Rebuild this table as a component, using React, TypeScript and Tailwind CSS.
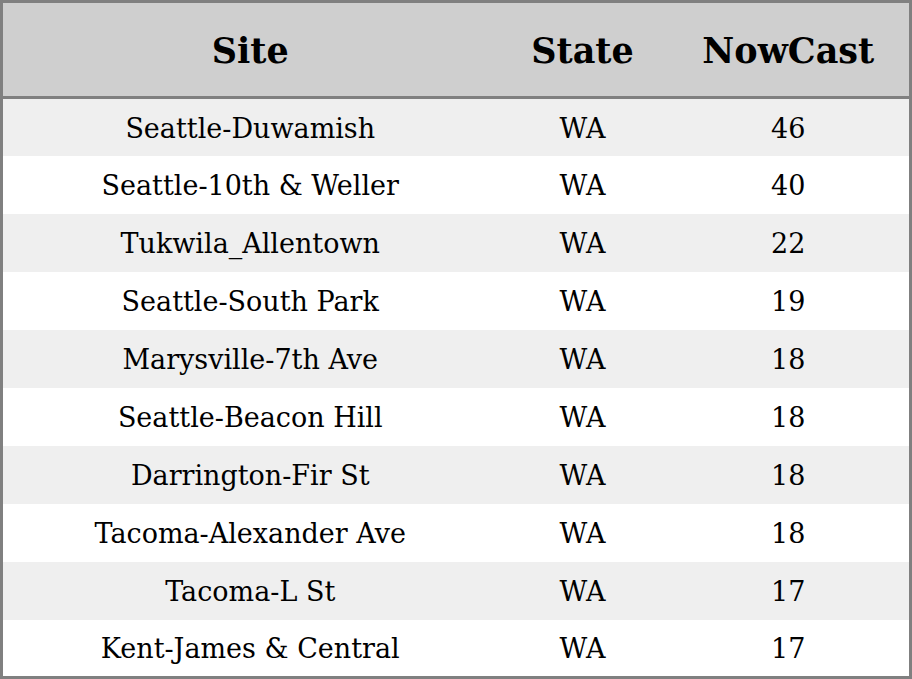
import React from "react";

const rows = [
  ["Seattle-Duwamish", "WA", "46"],
  ["Seattle-10th & Weller", "WA", "40"],
  ["Tukwila_Allentown", "WA", "22"],
  ["Seattle-South Park", "WA", "19"],
  ["Marysville-7th Ave", "WA", "18"],
  ["Seattle-Beacon Hill", "WA", "18"],
  ["Darrington-Fir St", "WA", "18"],
  ["Tacoma-Alexander Ave", "WA", "18"],
  ["Tacoma-L St", "WA", "17"],
  ["Kent-James & Central", "WA", "17"],
];

export default function App() {
  return (
    <div className="w-[912px] h-[679px] bg-white font-['DejaVu_Serif',serif] text-black">
      <table className="w-full h-full border-collapse border-[3px] border-[#808080] table-fixed">
        <colgroup>
          <col className="w-[496px]" />
          <col className="w-[170px]" />
          <col />
        </colgroup>
        <thead>
          <tr className="bg-[#cfcfcf] h-[96px] border-b-[3px] border-[#808080]">
            <th className="text-[35px] font-bold p-0 pt-[4px]">Site</th>
            <th className="text-[35px] font-bold p-0 pt-[4px]">State</th>
            <th className="text-[35px] font-bold p-0 pt-[4px]">NowCast</th>
          </tr>
        </thead>
        <tbody>
          {rows.map((r, i) => (
            <tr key={i} className={i % 2 === 0 ? "bg-[#efefef] h-[57.7px]" : "bg-white h-[57.7px]"}>
              <td className="text-center text-[27px] p-0 pt-[3px]">{r[0]}</td>
              <td className="text-center text-[27px] p-0 pt-[3px]">{r[1]}</td>
              <td className="text-center text-[27px] p-0 pt-[3px]">{r[2]}</td>
            </tr>
          ))}
        </tbody>
      </table>
    </div>
  );
}
